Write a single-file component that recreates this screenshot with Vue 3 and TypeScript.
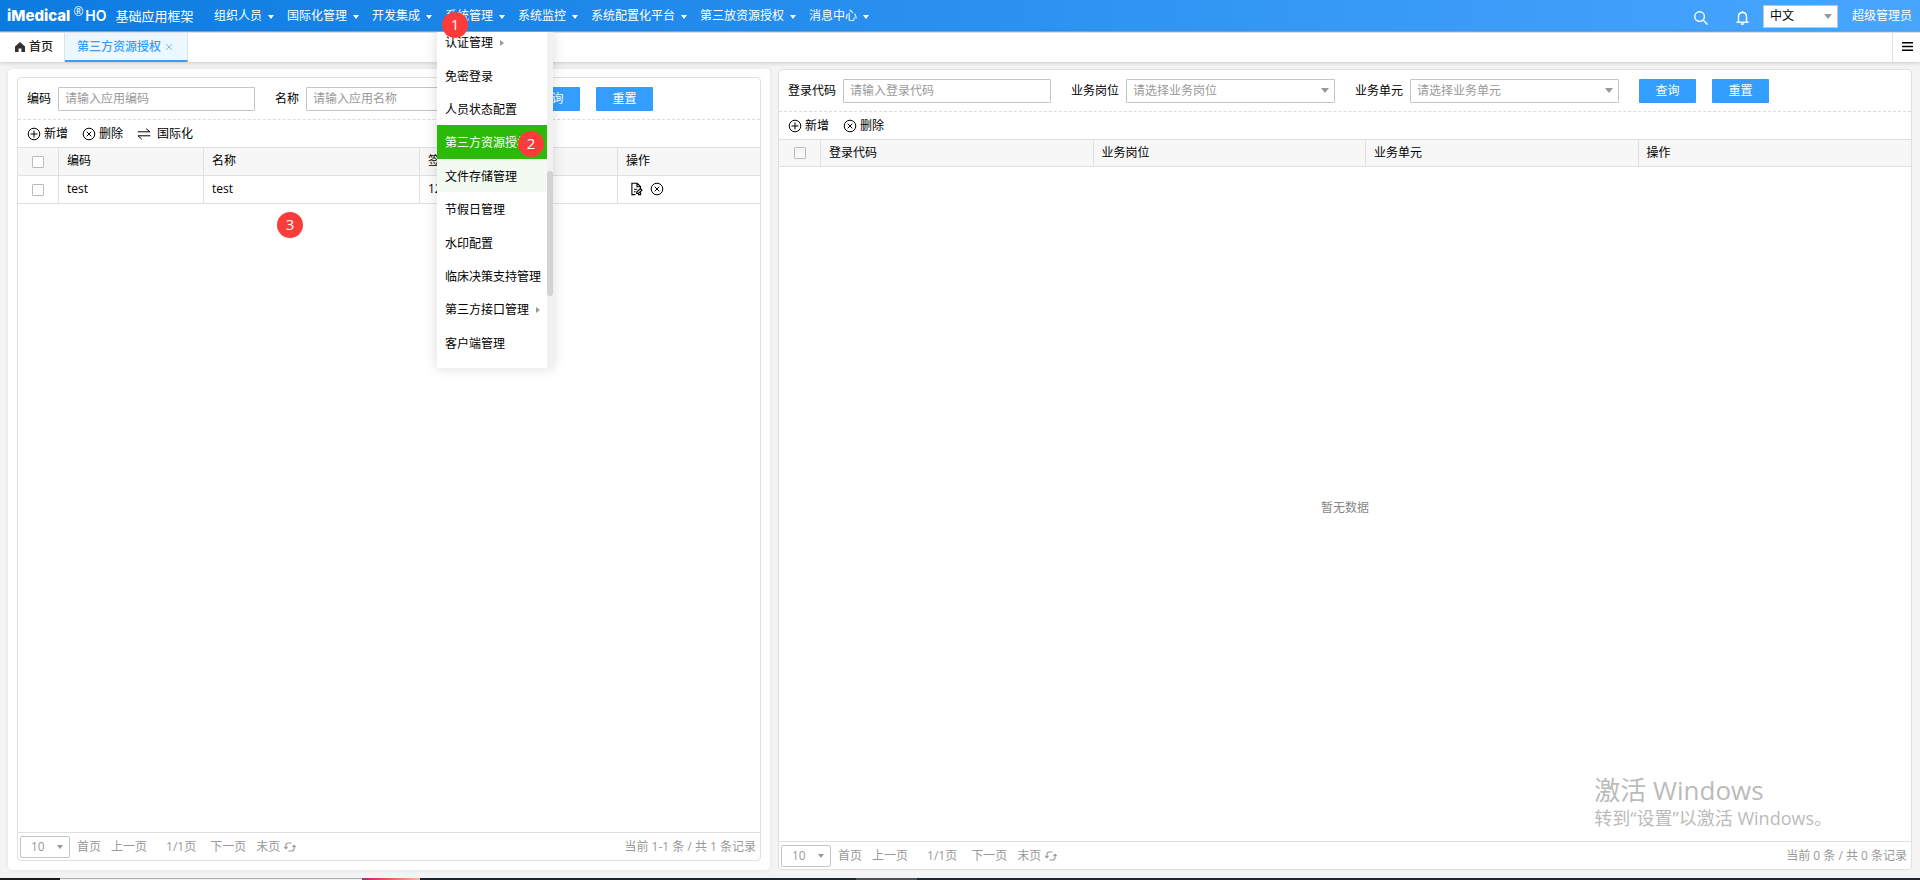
<script setup lang="ts">
import { ref } from 'vue'

interface MenuEntry {
  label: string
  sub?: boolean
  state?: 'active' | 'hover'
  badge?: number
}

interface NavEntry {
  label: string
  open?: boolean
}

interface AppRow {
  code: string
  name: string
  sign: string
}

const navItems: NavEntry[] = [
  { label: '组织人员' },
  { label: '国际化管理' },
  { label: '开发集成' },
  { label: '系统管理', open: true },
  { label: '系统监控' },
  { label: '系统配置化平台' },
  { label: '第三放资源授权' },
  { label: '消息中心' },
]

const menuItems: MenuEntry[] = [
  { label: '认证管理', sub: true },
  { label: '免密登录' },
  { label: '人员状态配置' },
  { label: '第三方资源授权', state: 'active', badge: 2 },
  { label: '文件存储管理', state: 'hover' },
  { label: '节假日管理' },
  { label: '水印配置' },
  { label: '临床决策支持管理' },
  { label: '第三方接口管理', sub: true },
  { label: '客户端管理' },
]

const rows: AppRow[] = [{ code: 'test', name: 'test', sign: '12' }]

const appCode = ref('')
const appName = ref('')
const loginCode = ref('')
const post = ref('')
const unit = ref('')
const language = ref('zh')
</script>

<template>
  <div class="page">
    <header class="topbar">
      <div class="brand">
        <strong class="logo">iMedical</strong><span class="reg">®</span><strong class="ho">HO</strong>
        <span class="product">基础应用框架</span>
      </div>
      <nav class="nav">
        <div v-for="item in navItems" :key="item.label" class="nav-item">
          <a href="#" class="nav-link">{{ item.label }}<i class="caret"></i></a>
          <template v-if="item.open">
            <div class="dropdown">
              <ul class="menu">
                <li v-for="entry in menuItems" :key="entry.label" class="menu-item" :class="entry.state">
                  <a href="#">{{ entry.label }}</a>
                  <i v-if="entry.sub" class="sub-arrow"></i>
                  <span v-if="entry.badge" class="badge badge-menu">{{ entry.badge }}</span>
                </li>
              </ul>
              <div class="scroll-track"><div class="scroll-thumb"></div></div>
            </div>
            <span class="badge badge-nav">1</span>
          </template>
        </div>
      </nav>
      <div class="tools">
        <button class="icon-btn search" type="button" aria-label="搜索">
          <svg width="14" height="14" viewBox="0 0 14 14" fill="none" stroke="#fff" stroke-width="1.4">
            <circle cx="5.6" cy="5.6" r="4.8" /><path d="M9 9l4.6 4.6" />
          </svg>
        </button>
        <button class="icon-btn bell" type="button" aria-label="通知">
          <svg width="13" height="14" viewBox="0 0 12 14" fill="none" stroke="#fff" stroke-width="1.4">
            <path d="M0 11.2h12M2 11V5.8C2 3 3.6 1.5 6 1.5S10 3 10 5.8V11M6 0v1.6M4.3 13h3.4" />
          </svg>
        </button>
        <span class="select lang">
          <select v-model="language" aria-label="语言"><option value="zh">中文</option></select>
        </span>
        <a href="#" class="user">超级管理员</a>
      </div>
    </header>

    <div class="tabbar">
      <a href="#" class="tab home">
        <svg width="10" height="10" viewBox="0 0 10 10" fill="#333"><path d="M5 0L0 4.6V10h3.6V6.6h2.8V10H10V4.6z" /></svg>
        首页
      </a>
      <div class="tab current">
        <a href="#">第三方资源授权</a>
        <button type="button" class="close" aria-label="关闭">
          <svg width="8" height="8" viewBox="0 0 8 8" stroke="#7fbdf5" stroke-width="1"><path d="M1 1l6 6M7 1L1 7" /></svg>
        </button>
      </div>
      <button type="button" class="tab-menu" aria-label="标签菜单">
        <svg width="11" height="9" viewBox="0 0 11 9" fill="#000"><path d="M0 0h11v1.6H0zM0 3.7h11v1.6H0zM0 7.4h11V9H0z" /></svg>
      </button>
    </div>

    <main class="content">
      <section class="card">
        <div class="panel left-panel">
          <form class="filters" @submit.prevent>
            <label for="app-code">编码</label>
            <input id="app-code" v-model="appCode" type="text" placeholder="请输入应用编码" />
            <label for="app-name">名称</label>
            <input id="app-name" v-model="appName" type="text" placeholder="请输入应用名称" />
            <button type="submit" class="primary">查询</button>
            <button type="reset" class="primary">重置</button>
          </form>
          <div class="toolbar">
            <button type="button" class="tool">
              <svg width="14" height="14" viewBox="0 0 14 14" fill="none" stroke="#000"><circle cx="7" cy="7" r="5.8" /><path d="M7 3.5v7M3.5 7h7" /></svg>新增
            </button>
            <button type="button" class="tool">
              <svg width="14" height="14" viewBox="0 0 14 14" fill="none" stroke="#000"><circle cx="7" cy="7" r="5.8" /><path d="M4.7 4.7l4.6 4.6M9.3 4.7L4.7 9.3" /></svg>删除
            </button>
            <button type="button" class="tool swap">
              <svg width="14" height="14" viewBox="0 0 14 14" fill="none" stroke="#000"><path d="M.7 4.8h12.2L9.2 1.7M13.3 8.8H1l3.7 3.3" /></svg>国际化
            </button>
          </div>
          <table class="grid">
            <colgroup><col class="c-check" /><col class="c-code" /><col class="c-name" /><col class="c-sign" /><col /></colgroup>
            <thead>
              <tr>
                <th class="check"><input type="checkbox" aria-label="全选" /></th>
                <th>编码</th>
                <th>名称</th>
                <th>签</th>
                <th>操作</th>
              </tr>
            </thead>
            <tbody>
              <tr v-for="row in rows" :key="row.code">
                <td class="check"><input type="checkbox" :aria-label="row.code" /></td>
                <td>{{ row.code }}</td>
                <td>{{ row.name }}</td>
                <td>{{ row.sign }}</td>
                <td>
                  <div class="ops">
                    <button type="button" class="icon-btn" aria-label="编辑">
                      <svg width="13" height="14" viewBox="0 0 13 14" fill="none" stroke="#000" stroke-width="1.1">
                        <path d="M5.5 12.6H1.9V1.3h5.3l3.3 3.3v1.6M7 1.5v3.2h3.2M4 7.2h3.2M4 9.8h1.6M6.6 11.4l.3-1.6 3.6-3.2 1.5 1.6-3.7 3.2zM10.6 10.2v2.4H8" />
                      </svg>
                    </button>
                    <button type="button" class="icon-btn" aria-label="删除行">
                      <svg width="14" height="14" viewBox="0 0 14 14" fill="none" stroke="#000"><circle cx="7" cy="7" r="5.8" /><path d="M4.7 4.7l4.6 4.6M9.3 4.7L4.7 9.3" /></svg>
                    </button>
                  </div>
                </td>
              </tr>
            </tbody>
          </table>
          <div class="blank"><span class="badge badge-table">3</span></div>
          <footer class="pager">
            <span class="select size"><select aria-label="每页条数"><option>10</option></select></span>
            <a href="#">首页</a><a href="#">上一页</a><span class="pages">1/1页</span><a href="#">下一页</a><a href="#">末页</a>
            <button type="button" class="icon-btn refresh" aria-label="刷新">
              <svg width="12" height="12" viewBox="0 0 12 12" fill="none" stroke="#999" stroke-width="1.1"><path d="M1.9 7.4V4.6a2.6 2.6 0 0 1 2.6-2.6h3.2M.3 6l1.6 1.6L3.5 6M10.1 4.6v2.8A2.6 2.6 0 0 1 7.5 10H4.3M11.7 6l-1.6-1.6L8.5 6" /></svg>
            </button>
            <span class="total">当前 1-1 条 / 共 1 条记录</span>
          </footer>
        </div>
      </section>

      <section class="panel right-panel">
        <form class="filters" @submit.prevent>
          <label for="login-code">登录代码</label>
          <input id="login-code" v-model="loginCode" type="text" placeholder="请输入登录代码" />
          <label for="post">业务岗位</label>
          <span class="select"><select id="post" v-model="post"><option value="">请选择业务岗位</option></select></span>
          <label for="unit">业务单元</label>
          <span class="select"><select id="unit" v-model="unit"><option value="">请选择业务单元</option></select></span>
          <button type="submit" class="primary">查询</button>
          <button type="reset" class="primary">重置</button>
        </form>
        <div class="toolbar">
          <button type="button" class="tool">
            <svg width="14" height="14" viewBox="0 0 14 14" fill="none" stroke="#000"><circle cx="7" cy="7" r="5.8" /><path d="M7 3.5v7M3.5 7h7" /></svg>新增
          </button>
          <button type="button" class="tool">
            <svg width="14" height="14" viewBox="0 0 14 14" fill="none" stroke="#000"><circle cx="7" cy="7" r="5.8" /><path d="M4.7 4.7l4.6 4.6M9.3 4.7L4.7 9.3" /></svg>删除
          </button>
        </div>
        <table class="grid">
          <colgroup><col class="c-check" /><col /><col /><col /><col /></colgroup>
          <thead>
            <tr>
              <th class="check"><input type="checkbox" aria-label="全选" disabled /></th>
              <th>登录代码</th>
              <th>业务岗位</th>
              <th>业务单元</th>
              <th>操作</th>
            </tr>
          </thead>
        </table>
        <div class="blank empty">暂无数据</div>
        <footer class="pager">
          <span class="select size"><select aria-label="每页条数"><option>10</option></select></span>
          <a href="#">首页</a><a href="#">上一页</a><span class="pages">1/1页</span><a href="#">下一页</a><a href="#">末页</a>
          <button type="button" class="icon-btn refresh" aria-label="刷新">
            <svg width="12" height="12" viewBox="0 0 12 12" fill="none" stroke="#999" stroke-width="1.1"><path d="M1.9 7.4V4.6a2.6 2.6 0 0 1 2.6-2.6h3.2M.3 6l1.6 1.6L3.5 6M10.1 4.6v2.8A2.6 2.6 0 0 1 7.5 10H4.3M11.7 6l-1.6-1.6L8.5 6" /></svg>
          </button>
          <span class="total">当前 0 条 / 共 0 条记录</span>
        </footer>
      </section>
    </main>

    <div class="taskbar">
      <span class="seg-start"></span><span class="seg-search"></span><span class="seg-color"></span>
      <span class="seg-apps"></span><span class="seg-active"></span><span class="seg-rest"></span>
    </div>

    <aside class="watermark">
      <p class="wm-title">激活 Windows</p>
      <p class="wm-text">转到“设置”以激活 Windows。</p>
    </aside>
  </div>
</template>

<style>
body {
  margin: 0;
  background: #f4f4f4;
}
</style>

<style scoped>
.page {
  position: relative;
  display: flex;
  flex-direction: column;
  min-height: 100vh;
  font: 12px/16px "Open Sans", "Noto Sans CJK SC", sans-serif;
  color: #000;
}
.page *,
.page *::after {
  box-sizing: border-box;
}
a {
  color: inherit;
  text-decoration: none;
}
button,
input,
select {
  font: inherit;
  color: inherit;
  margin: 0;
}
svg {
  display: block;
  flex: none;
}
.icon-btn {
  display: flex;
  padding: 0;
  border: 0;
  background: none;
}

/* top bar */
.topbar {
  display: flex;
  align-items: center;
  height: 32px;
  padding: 0 8px 0 7px;
  color: #fff;
  background: linear-gradient(90deg, #0c7be0, #48a6ff);
  box-shadow: inset 0 -1px #70aee8;
}
.brand {
  display: flex;
  align-items: center;
  width: 199px;
  height: 30px;
  white-space: nowrap;
}
.logo {
  font: 800 15px/20px Inter, sans-serif;
}
.reg {
  align-self: flex-start;
  margin: 4px 2px 0 3px;
  font-size: 12px;
  line-height: 14px;
}
.ho {
  font: 600 14px/20px Inter, sans-serif;
}
.product {
  margin-left: 9px;
  padding-bottom: 1px;
  font-size: 13px;
}
.nav {
  display: flex;
  flex: 1;
}
.nav-item {
  position: relative;
  height: 32px;
}
.nav-link {
  display: flex;
  align-items: center;
  height: 31px;
  padding: 0 5px 0 8px;
  white-space: nowrap;
}
.caret {
  margin: 2px 0 0 6px;
  border: 3px solid transparent;
  border-top: 4px solid #fff;
  border-bottom: 0;
}
.tools {
  display: flex;
  align-items: center;
  height: 31px;
}
.search {
  margin-top: 4px;
}
.bell {
  margin: 4px 14px 0 28px;
}
.user {
  margin-left: 14px;
}

/* drop-down menu */
.dropdown {
  position: absolute;
  z-index: 5;
  top: 32px;
  left: 0;
  display: flex;
  height: 336px;
  overflow: hidden;
  color: #000;
  background: #fff;
}
.nav-item:has(.dropdown)::after {
  content: "";
  position: absolute;
  top: 32px;
  left: 0;
  width: 116px;
  height: 336px;
  box-shadow: 0 0 12px rgba(0, 0, 0, 0.15);
  clip-path: inset(0 -14px -14px -14px);
}
.menu {
  display: flex;
  flex-direction: column;
  width: 110px;
  height: 334px;
  margin: -7px 0 0;
  padding: 0;
  list-style: none;
}
.menu-item {
  position: relative;
  display: flex;
  flex: 1;
  align-items: center;
  padding: 3px 8px 0;
  white-space: nowrap;
}
.menu-item.active {
  color: #fff;
  background: #2bba08;
}
.menu-item.hover {
  background: #f3faf1;
}
.sub-arrow {
  margin-left: 7px;
  border: 3px solid transparent;
  border-left: 4px solid #999;
  border-right: 0;
}
.scroll-track {
  width: 6px;
  padding-top: 139px;
  background: #f1f1f1;
}
.scroll-thumb {
  height: 125px;
  border-radius: 3px;
  background: #d3d3d3;
}

/* numbered markers */
.badge {
  position: absolute;
  z-index: 6;
  width: 26px;
  height: 26px;
  border-radius: 13px;
  background: #fc3b3b;
  color: #fff;
  font-size: 15px;
  line-height: 24px;
  text-align: center;
}
.badge-nav {
  top: 12px;
  left: 5px;
}
.badge-menu {
  top: 6px;
  right: 3px;
}
.badge-table {
  top: 8px;
  left: 259px;
}

/* tabs */
.tabbar {
  display: flex;
  height: 30px;
  background: #fff;
  border-top: 1px solid #e0e0e0;
  box-shadow: 0 1px 4px rgba(0, 0, 0, 0.18);
}
.tab {
  display: flex;
  align-items: center;
  font-weight: 500;
}
.home {
  gap: 4px;
  width: 65px;
  padding: 0 0 1px 15px;
  border-right: 1px solid #e0e0e0;
  color: #222;
}
.current {
  gap: 4px;
  padding: 1px 14px 0 12px;
  border-right: 1px solid #e0e0e0;
  border-bottom: 2px solid #339eff;
  color: #339eff;
  background: #ecf7ff;
}
.close {
  padding: 0;
  border: 0;
  background: none;
}
.tab-menu {
  width: 28px;
  margin-left: auto;
  padding: 0 0 3px 9px;
  border: 0;
  border-left: 1px solid #e0e0e0;
  background: none;
}

/* work area */
.content {
  display: grid;
  grid-template-columns: 762fr 1134fr;
  gap: 8px;
  flex: 1;
  padding: 7px 8px 8px;
}
.card {
  display: flex;
  padding: 8px 9px 9px;
  border-radius: 4px;
  background: #fff;
  box-shadow: 0 0 4px rgba(0, 0, 0, 0.08);
}
.panel {
  display: flex;
  flex: 1;
  flex-direction: column;
  min-width: 0;
  border: 1px solid #e0e0e0;
  border-radius: 4px;
  background: #fff;
}
.filters {
  display: flex;
  align-items: center;
  height: 42px;
  padding: 0 9px;
  border-bottom: 1px dashed #dcdcdc;
  white-space: nowrap;
}
.filters label {
  margin-right: 7px;
}
.filters > input,
.filters > .select {
  width: 197px;
  height: 24px;
  margin-right: 20px;
}
.right-panel .filters > input {
  width: 208px;
}
.right-panel .filters > .select {
  width: 209px;
}
.filters input {
  padding: 0 6px;
  border: 1px solid #c4c4c4;
  border-radius: 1px;
  outline: 0;
  background: #fff;
}
.filters input::placeholder {
  color: #999;
  opacity: 1;
}
.select {
  position: relative;
  display: block;
}
.select select {
  width: 100%;
  height: 100%;
  padding: 0 6px;
  border: 1px solid #c4c4c4;
  border-radius: 1px;
  appearance: none;
  background: #fff;
  color: #999;
}
.select::after {
  content: "";
  position: absolute;
  top: 9px;
  right: 6px;
  border: 4px solid transparent;
  border-top: 5px solid #999;
  border-bottom: 0;
  pointer-events: none;
}
.lang {
  width: 75px;
  height: 23px;
}
.lang select {
  color: #000;
}
.primary {
  width: 57px;
  height: 24px;
  margin-right: 16px;
  padding: 0;
  border: 0;
  border-radius: 1px;
  color: #fff;
  background: #339eff;
}
.toolbar {
  display: flex;
  align-items: center;
  gap: 14px;
  height: 27px;
  padding: 0 9px;
}
.tool {
  display: flex;
  align-items: center;
  gap: 3px;
  padding: 0;
  border: 0;
  background: none;
}
.swap {
  gap: 6px;
}

/* tables */
.grid {
  width: 100%;
  border-collapse: separate;
  border-spacing: 0;
  border-top: 1px solid #e0e0e0;
  table-layout: fixed;
}
.c-check {
  width: 41px;
}
.right-panel .c-check {
  width: 42px;
}
.c-code {
  width: 145px;
}
.c-name {
  width: 216px;
}
.c-sign {
  width: 198px;
}
.grid th,
.grid td {
  height: 28px;
  padding: 0 8px 2px;
  border-right: 1px solid #e0e0e0;
  border-bottom: 1px solid #e0e0e0;
  font-weight: 400;
  text-align: left;
}
.grid th:last-child,
.grid td:last-child {
  border-right: 0;
}
.grid th {
  background: #f7f7f7;
}
.right-panel .grid th {
  height: 27px;
  padding-bottom: 0;
}
.grid .check {
  padding: 0;
}
.check input {
  display: block;
  width: 12px;
  height: 12px;
  margin: 0 auto;
  border: 1px solid #bbb;
  border-radius: 1px;
  appearance: none;
  background: #fff;
}
.check input:disabled {
  background: #f7f7f7;
}
.ops {
  display: flex;
  gap: 7px;
  padding-left: 4px;
}
.blank {
  position: relative;
  flex: 1;
}
.empty {
  display: flex;
  align-items: center;
  justify-content: center;
  padding-top: 8px;
  color: #888;
}

/* pager */
.pager {
  display: flex;
  align-items: center;
  height: 28px;
  padding: 0 4px 0 2px;
  border-top: 1px solid #e0e0e0;
  color: #999;
}
.pager a {
  margin-right: 10px;
}
.pager .size {
  width: 50px;
  height: 22px;
  margin-right: 7px;
}
.size select {
  padding: 0 10px;
  border-radius: 2px;
}
.size::after {
  border-width: 4px 3px 0;
  right: 7px;
}
.pages {
  margin: 0 14px 0 9px;
}
.refresh {
  margin-left: -6px;
}
.total {
  margin-left: auto;
}

/* desktop edge */
.taskbar {
  display: flex;
  height: 2px;
}
.seg-start {
  width: 60px;
  background: #1a1c20;
}
.seg-search {
  width: 302px;
  border-top: 1px solid #b0b0b0;
  background: #f0f0f0;
}
.seg-color {
  width: 58px;
  background: linear-gradient(90deg, #b3217f, #e8664f 50%, #f3b9a0);
}
.seg-apps {
  width: 436px;
  background: #1f2430;
}
.seg-active {
  width: 61px;
  background: #4d5059;
}
.seg-rest {
  flex: 1;
  background: #1f2633;
}
.watermark {
  position: absolute;
  right: 88px;
  bottom: 49px;
  color: #bbb;
  white-space: nowrap;
  pointer-events: none;
}
.watermark p {
  margin: 0;
}
.wm-title {
  font-size: 26px;
  line-height: 30px;
}
.wm-text {
  font-size: 18px;
  line-height: 26px;
}
</style>
